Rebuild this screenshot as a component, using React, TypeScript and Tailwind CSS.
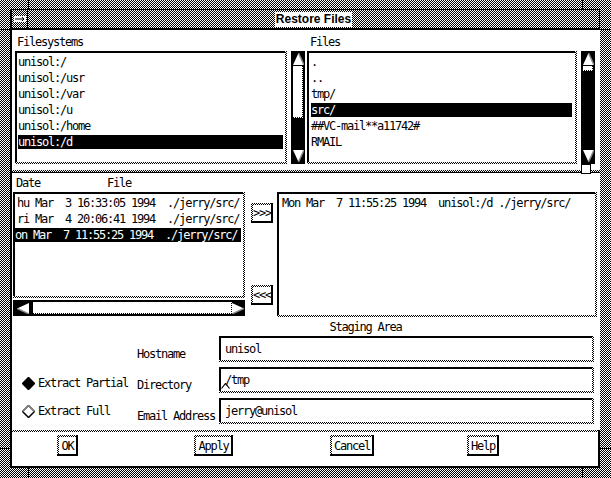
import type { ReactNode } from "react";

// 1-bit checkerboard used for every Motif "grey" surface
const dither = "bg-[image:repeating-conic-gradient(#000_0%_25%,#fff_0%_50%)] bg-[length:2px_2px]";

function Sunken({ className = "", children }: { className?: string; children?: ReactNode }) {
  return (
    <div className={`${dither} pr-[2px] pb-[2px] ${className}`}>
      <div className="h-full border-t-2 border-l-2 border-black bg-white overflow-hidden">{children}</div>
    </div>
  );
}

function Btn({ className = "", children }: { className?: string; children: ReactNode }) {
  return (
    <div className={`bg-black pr-[2px] pb-[2px] ${className}`}>
      <div className={`${dither} pl-[2px] pt-[2px] h-full`}>
        <div className="h-full bg-white flex items-center justify-center whitespace-pre">{children}</div>
      </div>
    </div>
  );
}

function Row({ text, sel }: { text: string; sel?: boolean }) {
  return (
    <div className={`h-[14px] leading-[14px] mb-[2px] whitespace-pre ${sel ? "bg-black text-white" : ""}`}>
      {text}
    </div>
  );
}

function Arrow({ dir }: { dir: "up" | "down" | "left" | "right" }) {
  if (dir === "up")
    return (
      <svg width="11" height="12" className="shrink-0">
        <polygon points="5.5,0 11,12 0,12" fill="#fff" />
        <line x1="5.5" y1="0" x2="11" y2="12" stroke="#888" strokeWidth="1.5" />
      </svg>
    );
  if (dir === "down")
    return (
      <svg width="11" height="12" className="shrink-0">
        <polygon points="0,0 11,0 5.5,12" fill="#fff" />
        <line x1="11" y1="0" x2="5.5" y2="12" stroke="#888" strokeWidth="1.5" />
      </svg>
    );
  if (dir === "left")
    return (
      <svg width="12" height="11" className="shrink-0">
        <polygon points="0,5.5 12,0 12,11" fill="#fff" />
        <line x1="0" y1="5.5" x2="12" y2="11" stroke="#888" strokeWidth="1.5" />
      </svg>
    );
  return (
    <svg width="12" height="11" className="shrink-0">
      <polygon points="0,0 12,5.5 0,11" fill="#fff" />
      <line x1="12" y1="5.5" x2="0" y2="11" stroke="#888" strokeWidth="1.5" />
    </svg>
  );
}

function VScroll({ thumb }: { thumb: string }) {
  return (
    <div className="w-[14px] h-[113px] bg-black flex flex-col pl-[2px] pt-[2px] pb-[2px]">
      <Arrow dir="up" />
      <div className={`${dither} pr-[1px] pb-[1px] w-[10px] mt-[1px] ${thumb}`}>
        <div className="h-full bg-white" />
      </div>
      <div className="flex-1" />
      <Arrow dir="down" />
    </div>
  );
}

function Diamond({ filled }: { filled?: boolean }) {
  return (
    <svg width="13" height="13" className="shrink-0">
      <polygon
        points="6.5,0.5 12.5,6.5 6.5,12.5 0.5,6.5"
        fill={filled ? "#000" : "#fff"}
        stroke="#000"
        strokeWidth="1.5"
      />
      {!filled && <polyline points="0.5,6.5 6.5,0.5 12.5,6.5" fill="none" stroke="#888" strokeWidth="1.5" />}
    </svg>
  );
}

function Field({ label, children }: { label: string; children?: ReactNode }) {
  return (
    <div className="flex items-end h-[26px]">
      <div className="w-[82px] h-[14px] leading-[14px] mb-[1px]">{label}</div>
      <Sunken className="w-[375px] h-[26px]">
        <div className="h-full flex items-center pl-[4px] relative">{children}</div>
      </Sunken>
    </div>
  );
}

export default function App() {
  return (
    <div
      className={`${dither} relative w-[611px] h-[478px] overflow-hidden pt-[9px] pl-[10px] pr-[11px] pb-[10px] font-['DejaVu_Sans_Mono',monospace] text-[12px] tracking-[-1.22px] text-black`}
    >
      {/* window frame resize marks */}
      <div className="absolute left-[28px] top-0 w-px h-[9px] bg-black" />
      <div className="absolute left-[582px] top-0 w-px h-[9px] bg-black" />
      <div className="absolute left-[28px] bottom-0 w-px h-[10px] bg-black" />
      <div className="absolute left-[582px] bottom-0 w-px h-[10px] bg-black" />
      <div className="absolute left-0 top-[29px] w-[10px] h-px bg-black" />
      <div className="absolute left-0 top-[448px] w-[10px] h-px bg-black" />
      <div className="absolute right-0 top-[29px] w-[11px] h-px bg-black" />
      <div className="absolute right-0 top-[448px] w-[11px] h-px bg-black" />

      <div className="h-full flex flex-col border-l-2 border-black">
        {/* title bar */}
        <div className="h-[21px] shrink-0 flex border-t border-b-2 border-r border-black">
          <div className={`${dither} w-[16px] border-r border-black flex items-center justify-center`}>
            <svg width="12" height="8">
              <rect x="0" y="1" width="12" height="6" fill="#fff" />
              <line x1="1" y1="4" x2="10" y2="4" stroke="#000" />
              <polyline points="8,2 10,4 8,6" fill="none" stroke="#000" />
            </svg>
          </div>
          <div className={`${dither} flex-1 flex items-center justify-center`}>
            <span className="bg-white px-[1px] leading-[15px] font-['Liberation_Sans',Arial,sans-serif] font-bold text-[12px] tracking-normal">
              Restore Files
            </span>
          </div>
        </div>

        {/* client area */}
        <div className="flex-1 flex flex-col bg-white">
          {/* top pane */}
          <div className="h-[140px] shrink-0 flex flex-col">
            <div className="h-[21px] flex items-center pt-[2px]">
              <div className="w-[298px] pl-[5px]">Filesystems</div>
              <div>Files</div>
            </div>
            <div className="flex pl-[3px]">
              <Sunken className="w-[272px] h-[113px]">
                <div className="pt-[2px] pl-[1px] pr-[2px]">
                  <Row text="unisol:/" />
                  <Row text="unisol:/usr" />
                  <Row text="unisol:/var" />
                  <Row text="unisol:/u" />
                  <Row text="unisol:/home" />
                  <Row text="unisol:/d" sel />
                </div>
              </Sunken>
              <div className="ml-[4px]">
                <VScroll thumb="h-[52px]" />
              </div>
              <Sunken className="w-[270px] h-[113px] ml-[2px]">
                <div className="pt-[2px] pl-[2px] pr-[3px]">
                  <Row text="." />
                  <Row text=".." />
                  <Row text="tmp/" />
                  <Row text="src/" sel />
                  <Row text="##VC-mail**a11742#" />
                  <Row text="RMAIL" />
                </div>
              </Sunken>
              <div className="ml-[4px]">
                <VScroll thumb="h-[5px]" />
              </div>
            </div>
          </div>

          {/* pane sash */}
          <div className="h-[3px] shrink-0 flex flex-col relative">
            <div className={`${dither} h-[2px]`} />
            <div className="h-px bg-black" />
            <div className="absolute left-[569px] top-[-6px] w-[10px] h-[10px] bg-white border border-black" />
          </div>

          {/* middle pane */}
          <div className="h-[144px] shrink-0 flex flex-col">
            <div className="h-[19px] flex items-center">
              <div className="w-[95px] pl-[4px]">Date</div>
              <div>File</div>
            </div>
            <div className="flex pl-[1px]">
              <div className="w-[232px] flex flex-col">
                <Sunken className="w-[232px] h-[106px]">
                  <div className="pt-[2px] pr-[2px]">
                    <div className="pl-[2px]">
                      <Row text="hu Mar  3 16:33:05 1994  ./jerry/src/" />
                      <Row text="ri Mar  4 20:06:41 1994  ./jerry/src/" />
                    </div>
                    <Row text="on Mar  7 11:55:25 1994  ./jerry/src/" sel />
                  </div>
                </Sunken>
                <div className="h-[16px] mt-[2px] bg-black flex items-center pl-[4px]">
                  <Arrow dir="left" />
                  <div className={`${dither} pr-[1px] pb-[1px] ml-[4px] w-[199px] h-[12px]`}>
                    <div className="h-full bg-white" />
                  </div>
                  <Arrow dir="right" />
                </div>
              </div>
              <div className="w-[22px] ml-[6px] flex flex-col">
                <Btn className="w-[22px] h-[20px] mt-[11px]">&gt;&gt;&gt;</Btn>
                <Btn className="w-[22px] h-[20px] mt-[62px]">&lt;&lt;&lt;</Btn>
              </div>
              <Sunken className="w-[320px] h-[125px] ml-[4px]">
                <div className="pt-[2px] pl-[3px]">
                  <Row text="Mon Mar  7 11:55:25 1994  unisol:/d ./jerry/src/" />
                </div>
              </Sunken>
            </div>
          </div>

          {/* staging pane */}
          <div className="h-[113px] shrink-0 flex">
            <div className="w-[125px] pl-[10px] pt-[59px] flex flex-col gap-[14px]">
              <div className="h-[14px] flex items-center gap-[3px]">
                <Diamond filled />
                <span>Extract Partial</span>
              </div>
              <div className="h-[14px] flex items-center gap-[3px]">
                <Diamond />
                <span>Extract Full</span>
              </div>
            </div>
            <div className="w-[457px] flex flex-col">
              <div className="h-[19px] flex items-center justify-center">Staging Area</div>
              <div className="flex flex-col gap-[5px]">
                <Field label="Hostname">unisol</Field>
                <Field label="Directory">
                  <span>/tmp</span>
                  <svg width="9" height="6" className="absolute left-[0px] bottom-[2px]">
                    <polyline points="0.5,5.5 4.5,0.5 8.5,5.5" fill="none" stroke="#000" strokeWidth="1.2" />
                  </svg>
                </Field>
                <Field label="Email Address">jerry@unisol</Field>
              </div>
            </div>
          </div>

          {/* button bar */}
          <div className="flex-1 flex flex-col border-b-2 border-r-2 border-black">
            <div className={`${dither} h-[2px]`} />
            <div className="flex pt-[3px]">
              <Btn className="w-[21px] h-[21px] ml-[45px]">OK</Btn>
              <Btn className="w-[39px] h-[21px] ml-[116px]">Apply</Btn>
              <Btn className="w-[44px] h-[21px] ml-[97px]">Cancel</Btn>
              <Btn className="w-[32px] h-[21px] ml-[93px]">Help</Btn>
            </div>
          </div>
        </div>
      </div>
    </div>
  );
}
